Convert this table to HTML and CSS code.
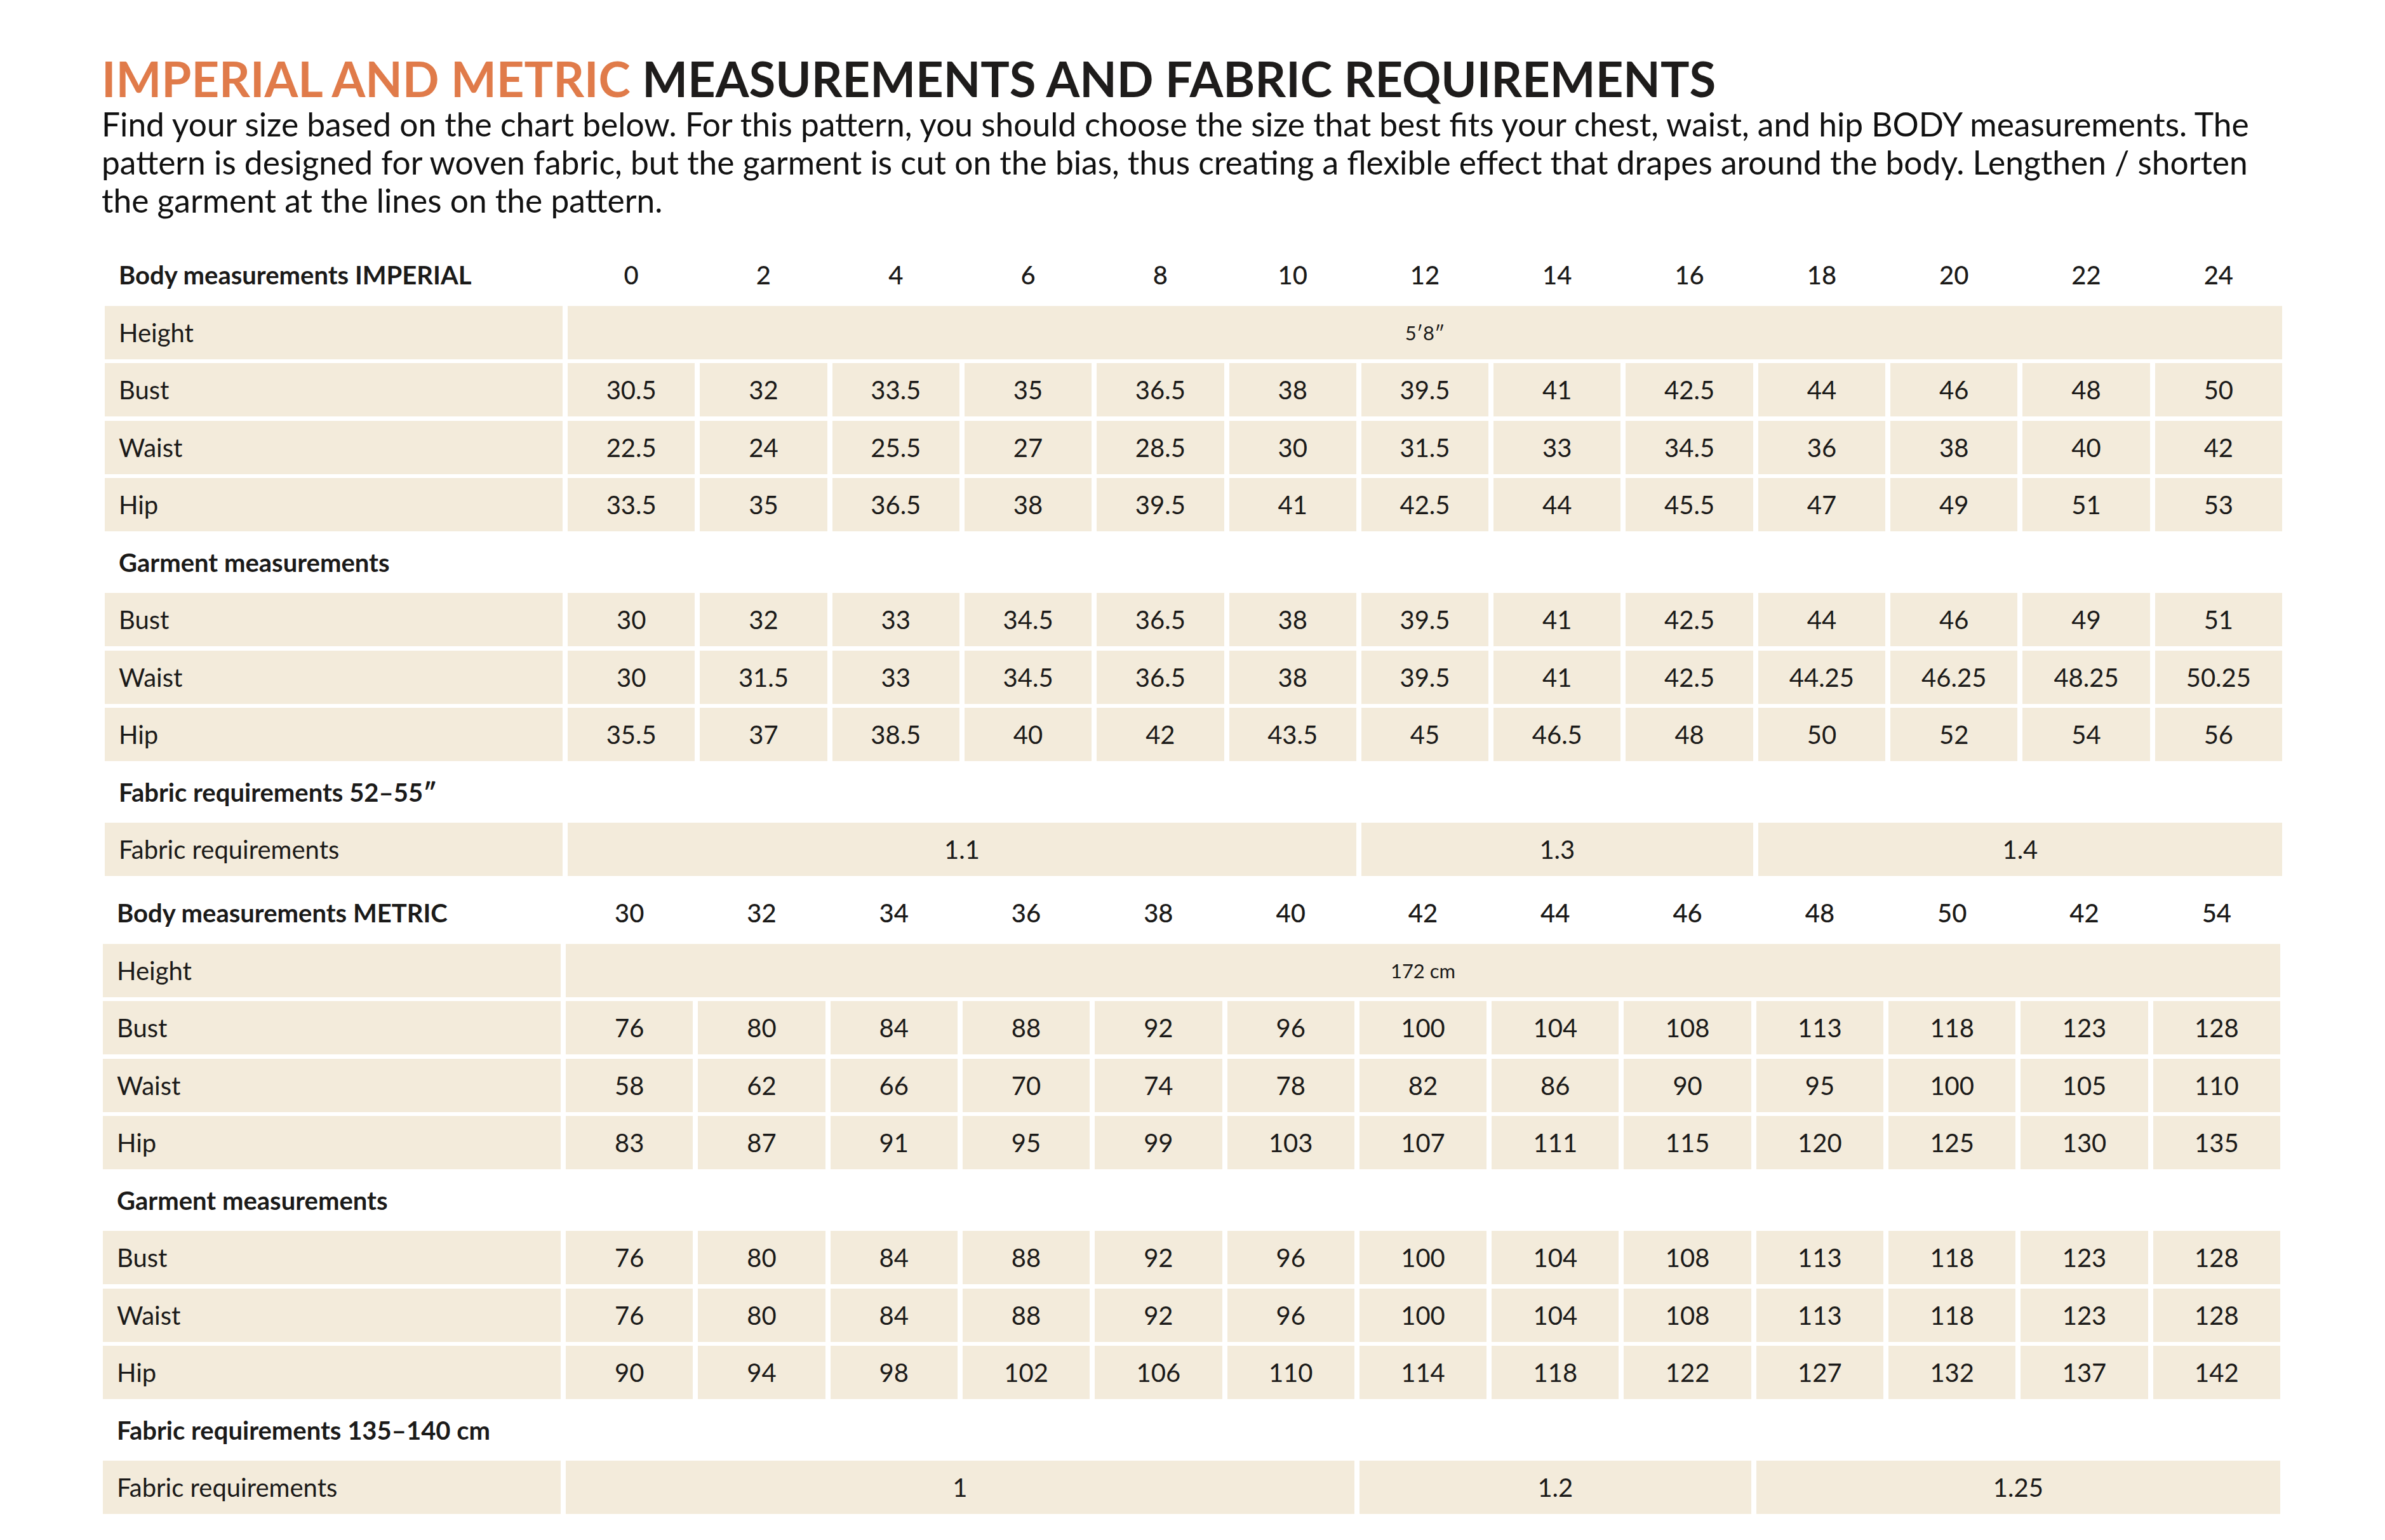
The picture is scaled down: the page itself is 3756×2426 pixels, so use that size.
FILE: index.html
```html
<!DOCTYPE html>
<html lang="en">
<head>
<meta charset="utf-8">
<title>Imperial and metric measurements and fabric requirements</title>
<link rel="stylesheet" href="styles.css">
</head>
<body>
<main class="page">
  <h1 class="title"><span class="accent">IMPERIAL AND METRIC</span> MEASUREMENTS AND FABRIC REQUIREMENTS</h1>
  <p class="intro">Find your size based on the chart below. For this pattern, you should choose the size that best fits your chest, waist, and hip BODY measurements. The<br>pattern is designed for woven fabric, but the garment is cut on the bias, thus creating a flexible effect that drapes around the body. Lengthen / shorten<br>the garment at the lines on the pattern.</p>

  <section class="chart">
    <div class="head label">Body measurements IMPERIAL</div>
    <div class="head num">0</div><div class="head num">2</div><div class="head num">4</div><div class="head num">6</div><div class="head num">8</div><div class="head num">10</div><div class="head num">12</div><div class="head num">14</div><div class="head num">16</div><div class="head num">18</div><div class="head num">20</div><div class="head num">22</div><div class="head num">24</div>

    <div class="cell label">Height</div>
    <div class="cell small span-all">5′8″</div>

    <div class="cell label">Bust</div>
    <div class="cell">30.5</div><div class="cell">32</div><div class="cell">33.5</div><div class="cell">35</div><div class="cell">36.5</div><div class="cell">38</div><div class="cell">39.5</div><div class="cell">41</div><div class="cell">42.5</div><div class="cell">44</div><div class="cell">46</div><div class="cell">48</div><div class="cell">50</div>

    <div class="cell label">Waist</div>
    <div class="cell">22.5</div><div class="cell">24</div><div class="cell">25.5</div><div class="cell">27</div><div class="cell">28.5</div><div class="cell">30</div><div class="cell">31.5</div><div class="cell">33</div><div class="cell">34.5</div><div class="cell">36</div><div class="cell">38</div><div class="cell">40</div><div class="cell">42</div>

    <div class="cell label">Hip</div>
    <div class="cell">33.5</div><div class="cell">35</div><div class="cell">36.5</div><div class="cell">38</div><div class="cell">39.5</div><div class="cell">41</div><div class="cell">42.5</div><div class="cell">44</div><div class="cell">45.5</div><div class="cell">47</div><div class="cell">49</div><div class="cell">51</div><div class="cell">53</div>

    <div class="head label full">Garment measurements</div>

    <div class="cell label">Bust</div>
    <div class="cell">30</div><div class="cell">32</div><div class="cell">33</div><div class="cell">34.5</div><div class="cell">36.5</div><div class="cell">38</div><div class="cell">39.5</div><div class="cell">41</div><div class="cell">42.5</div><div class="cell">44</div><div class="cell">46</div><div class="cell">49</div><div class="cell">51</div>

    <div class="cell label">Waist</div>
    <div class="cell">30</div><div class="cell">31.5</div><div class="cell">33</div><div class="cell">34.5</div><div class="cell">36.5</div><div class="cell">38</div><div class="cell">39.5</div><div class="cell">41</div><div class="cell">42.5</div><div class="cell">44.25</div><div class="cell">46.25</div><div class="cell">48.25</div><div class="cell">50.25</div>

    <div class="cell label">Hip</div>
    <div class="cell">35.5</div><div class="cell">37</div><div class="cell">38.5</div><div class="cell">40</div><div class="cell">42</div><div class="cell">43.5</div><div class="cell">45</div><div class="cell">46.5</div><div class="cell">48</div><div class="cell">50</div><div class="cell">52</div><div class="cell">54</div><div class="cell">56</div>

    <div class="head label full">Fabric requirements 52–55″</div>

    <div class="cell label">Fabric requirements</div>
    <div class="cell span-6">1.1</div><div class="cell span-3">1.3</div><div class="cell span-4">1.4</div>
  </section>

  <section class="chart metric">
    <div class="head label">Body measurements METRIC</div>
    <div class="head num">30</div><div class="head num">32</div><div class="head num">34</div><div class="head num">36</div><div class="head num">38</div><div class="head num">40</div><div class="head num">42</div><div class="head num">44</div><div class="head num">46</div><div class="head num">48</div><div class="head num">50</div><div class="head num">42</div><div class="head num">54</div>

    <div class="cell label">Height</div>
    <div class="cell small span-all">172 cm</div>

    <div class="cell label">Bust</div>
    <div class="cell">76</div><div class="cell">80</div><div class="cell">84</div><div class="cell">88</div><div class="cell">92</div><div class="cell">96</div><div class="cell">100</div><div class="cell">104</div><div class="cell">108</div><div class="cell">113</div><div class="cell">118</div><div class="cell">123</div><div class="cell">128</div>

    <div class="cell label">Waist</div>
    <div class="cell">58</div><div class="cell">62</div><div class="cell">66</div><div class="cell">70</div><div class="cell">74</div><div class="cell">78</div><div class="cell">82</div><div class="cell">86</div><div class="cell">90</div><div class="cell">95</div><div class="cell">100</div><div class="cell">105</div><div class="cell">110</div>

    <div class="cell label">Hip</div>
    <div class="cell">83</div><div class="cell">87</div><div class="cell">91</div><div class="cell">95</div><div class="cell">99</div><div class="cell">103</div><div class="cell">107</div><div class="cell">111</div><div class="cell">115</div><div class="cell">120</div><div class="cell">125</div><div class="cell">130</div><div class="cell">135</div>

    <div class="head label full">Garment measurements</div>

    <div class="cell label">Bust</div>
    <div class="cell">76</div><div class="cell">80</div><div class="cell">84</div><div class="cell">88</div><div class="cell">92</div><div class="cell">96</div><div class="cell">100</div><div class="cell">104</div><div class="cell">108</div><div class="cell">113</div><div class="cell">118</div><div class="cell">123</div><div class="cell">128</div>

    <div class="cell label">Waist</div>
    <div class="cell">76</div><div class="cell">80</div><div class="cell">84</div><div class="cell">88</div><div class="cell">92</div><div class="cell">96</div><div class="cell">100</div><div class="cell">104</div><div class="cell">108</div><div class="cell">113</div><div class="cell">118</div><div class="cell">123</div><div class="cell">128</div>

    <div class="cell label">Hip</div>
    <div class="cell">90</div><div class="cell">94</div><div class="cell">98</div><div class="cell">102</div><div class="cell">106</div><div class="cell">110</div><div class="cell">114</div><div class="cell">118</div><div class="cell">122</div><div class="cell">127</div><div class="cell">132</div><div class="cell">137</div><div class="cell">142</div>

    <div class="head label full">Fabric requirements 135–140 cm</div>

    <div class="cell label">Fabric requirements</div>
    <div class="cell span-6">1</div><div class="cell span-3">1.2</div><div class="cell span-4">1.25</div>
  </section>
</main>
</body>
</html>
```

FILE: styles.css
```css
html, body {
  margin: 0;
  padding: 0;
  background: #ffffff;
}

body {
  font-family: Lato, "Open Sans", "Liberation Sans", sans-serif;
  color: #1b1a19;
}

.page {
  width: 3434px;
  padding: 85px 0 0 160px;
}

.title {
  margin: 0;
  font-size: 76px;
  line-height: 77px;
  font-weight: 700;
  color: #1e1c1b;
  white-space: nowrap;
}

.title .accent {
  color: #e07b4a;
}

.intro {
  margin: 3px 0 0 0;
  font-size: 51.5px;
  line-height: 60px;
  font-weight: 400;
  color: #111111;
  white-space: nowrap;
}

.chart {
  display: grid;
  grid-template-columns: 721px repeat(13, 1fr);
  grid-auto-rows: 84px;
  column-gap: 8px;
  row-gap: 6.5px;
  width: 3429px;
  margin: 46px 0 0 5px;
}

.chart.metric {
  margin-top: 16px;
  margin-left: 2px;
}

.cell {
  background: #f3ebdb;
  display: flex;
  align-items: center;
  justify-content: center;
  font-size: 40px;
  font-weight: 400;
}

.head {
  display: flex;
  align-items: center;
  justify-content: center;
  font-size: 40px;
}

.head.num {
  font-weight: 500;
}

.label {
  justify-content: flex-start;
  padding-left: 22px;
  font-size: 40px;
}

.head.label {
  font-weight: 700;
  font-size: 40px;
}

.full {
  grid-column: 1 / -1;
}

.small {
  font-size: 31px;
}

.span-all {
  grid-column: 2 / -1;
}

.span-6 {
  grid-column: span 6;
}

.span-3 {
  grid-column: span 3;
}

.span-4 {
  grid-column: span 4;
}
```
